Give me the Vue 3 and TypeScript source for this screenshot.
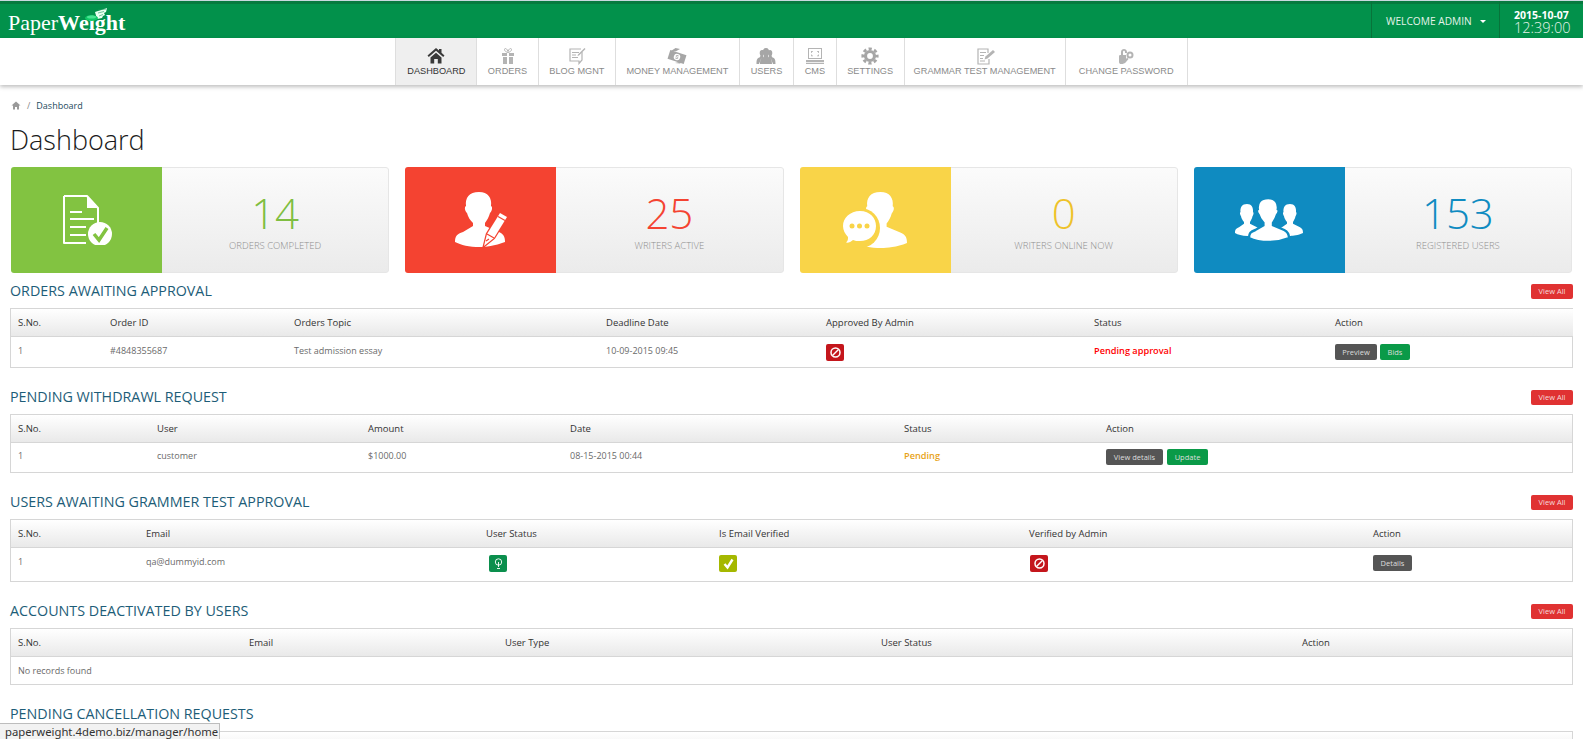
<script setup lang="ts">
type Btn = { label: string; kind: 'dark' | 'green'; w: number }
type Cell =
  | { t: 'text'; v: string }
  | { t: 'status'; v: string; c: string }
  | { t: 'badge'; icon: 'ban' | 'check' | 'bulb' }
  | { t: 'btns'; v: Btn[] }
type Section = {
  title: string
  cols: number[]
  heads: string[]
  rowClass: string
  row: Cell[]
  empty?: string
  noLink?: boolean
}
const txt = (v: string): Cell => ({ t: 'text', v })
const navItems = [
  { label: 'Dashboard', icon: 'home', active: true, w: 82 },
  { label: 'Orders', icon: 'gift', w: 61.3 },
  { label: 'Blog Mgnt', icon: 'blog', w: 77.5 },
  { label: 'Money Management', icon: 'money', w: 123.5 },
  { label: 'Users', icon: 'users', w: 54.6 },
  { label: 'CMS', icon: 'cms', w: 42.4 },
  { label: 'Settings', icon: 'gear', w: 68 },
  { label: 'Grammar Test Management', icon: 'test', w: 161 },
  { label: 'Change Password', icon: 'key', w: 122 },
]
const cards = [
  { n: '14', label: 'Orders Completed', cls: 'c-green', icon: 'doc' },
  { n: '25', label: 'Writers Active', cls: 'c-red', icon: 'pen' },
  { n: '0', label: 'Writers Online Now', cls: 'c-yellow', icon: 'chat' },
  { n: '153', label: 'Registered Users', cls: 'c-blue', icon: 'group' },
]
const sections: Section[] = [
  {
    title: 'Orders Awaiting Approval',
    cols: [92, 184, 312, 220, 268, 241, 245],
    heads: ['S.No.', 'Order ID', 'Orders Topic', 'Deadline Date', 'Approved By Admin', 'Status', 'Action'],
    rowClass: 'r1',
    row: [
      txt('1'), txt('#4848355687'), txt('Test admission essay'), txt('10-09-2015 09:45'),
      { t: 'badge', icon: 'ban' },
      { t: 'status', v: 'Pending approval', c: 'st-red' },
      { t: 'btns', v: [{ label: 'Preview', kind: 'dark', w: 42 }, { label: 'Bids', kind: 'green', w: 30 }] },
    ],
  },
  {
    title: 'Pending Withdrawl Request',
    cols: [139, 211, 202, 334, 202, 473],
    heads: ['S.No.', 'User', 'Amount', 'Date', 'Status', 'Action'],
    rowClass: 'r2',
    row: [
      txt('1'), txt('customer'), txt('$1000.00'), txt('08-15-2015 00:44'),
      { t: 'status', v: 'Pending', c: 'st-amber' },
      { t: 'btns', v: [{ label: 'View details', kind: 'dark', w: 57 }, { label: 'Update', kind: 'green', w: 41 }] },
    ],
  },
  {
    title: 'Users Awaiting Grammer Test Approval',
    cols: [128, 340, 233, 310, 344, 206],
    heads: ['S.No.', 'Email', 'User Status', 'Is Email Verified', 'Verified by Admin', 'Action'],
    rowClass: 'r3',
    row: [
      txt('1'), txt('qa@dummyid.com'),
      { t: 'badge', icon: 'bulb' },
      { t: 'badge', icon: 'check' },
      { t: 'badge', icon: 'ban' },
      { t: 'btns', v: [{ label: 'Details', kind: 'dark', w: 39 }] },
    ],
  },
  {
    title: 'Accounts Deactivated By Users',
    cols: [231, 256, 376, 421, 277],
    heads: ['S.No.', 'Email', 'User Type', 'User Status', 'Action'],
    rowClass: 'r4',
    row: [],
    empty: 'No records found',
  },
  {
    title: 'Pending Cancellation Requests',
    cols: [1561],
    heads: [''],
    rowClass: 'r5',
    row: [],
    noLink: true,
  },
]
const personPath =
  'M24 0C33 0 37 6 36 14C38 15 37 19 35 21C34 25 32 28 30 31L30 34L44 40C48 42 50 44 50 50C40 54 30 55 25 55C14 55 6 53 0 50C0 44 2 42 8 40L18 34L18 31C15 28 13 25 12 21C10 19 9 15 11 14C10 6 14 0 24 0Z'
</script>

<template>
  <div class="page">
    <header class="topbar">
      <div class="logo">
        <span class="logo-a">Paper</span><span class="logo-b">Weight</span>
        <svg class="logo-mark" width="24" height="14" viewBox="0 0 24 14">
          <path d="M10 4L22 0L21 4L19 5L20 7L18 8L17 10L12 11Z" fill="#eafff2" />
          <path d="M13 2L21 1M13 5L19 3.500M14 8L18 6.500" stroke="#1a9a5c" stroke-width=".6" />
          <ellipse cx="6.500" cy="10" rx="6.500" ry="3" fill="#10c866" />
          <ellipse cx="6.500" cy="9" rx="4.500" ry="1.500" fill="#4be394" />
        </svg>
      </div>
      <div class="top-right">
        <div class="welcome">WELCOME ADMIN <span class="caret"></span></div>
        <div class="clock">
          <div class="date">2015-10-07</div>
          <div class="time">12:39:00</div>
        </div>
      </div>
    </header>

    <nav class="nav">
      <a
        v-for="item in navItems"
        :key="item.label"
        class="nav-item"
        :class="[{ active: item.active }, 'i-' + item.icon]"
        :style="{ width: item.w + 'px' }"
      >
        <svg class="nav-ico" width="20" height="18" viewBox="0 0 20 18" fill="currentColor">
          <template v-if="item.icon === 'home'">
            <path d="M10 1L1.500 8.500L2.800 10L10 3.700L17.200 10L18.500 8.500L15.500 5.800V2H13V3.600Z" />
            <path d="M4.500 10.500L10 5.700L15.500 10.500V16.500H11.800V12H8.200V16.500H4.500Z" />
          </template>
          <template v-else-if="item.icon === 'gift'">
            <path d="M4 6H9V9H4ZM11 6H16V9H11ZM5 10H9V17H5ZM11 10H15V17H11Z" />
            <path d="M10 5.500C8 5 6.500 4 6.500 2.500C6.500 1 9 1 10 4.500C11 1 13.500 1 13.500 2.500C13.500 4 12 5 10 5.500Z" fill="none" stroke="currentColor" />
          </template>
          <template v-else-if="item.icon === 'blog'">
            <path d="M15 5V13L12 16.500V14H3V2H14" fill="none" stroke="currentColor" stroke-width="1.200" />
            <path d="M5 5H12V6H5ZM5 7.500H9V8.500H5ZM5 10H11V11H5Z" />
            <path d="M17.500 1L18.500 2L12 8.500L10.500 9L11 7.500Z" />
          </template>
          <template v-else-if="item.icon === 'money'">
            <g transform="rotate(18 10 10)">
              <path d="M1.500 5.500H18.500V14.500H1.500ZM10 6.800A3.200 3.200 0 1 0 10 13.200A3.200 3.200 0 0 0 10 6.800Z" fill-rule="evenodd" />
              <path d="M11.300 8.500H9.500C8.600 8.500 8.600 10 9.700 10H10.300C11.400 10 11.400 11.500 10.500 11.500H8.700" fill="none" stroke="currentColor" stroke-width=".8" />
            </g>
            <path d="M4 4L8.500 1L13 2L9 4.300ZM8 16L13 16.500L17 14L12 15Z" />
          </template>
          <template v-else-if="item.icon === 'users'">
            <path d="M6 3C8 3 8.500 5 8 7L7 9L8 11L5 12L3 17H0.500C0.500 13 1 11 3.500 10.500L4.500 9L3.800 7C3.500 5 4 3 6 3ZM14 3C16 3 16.500 5 16.200 7L15.500 9L16.500 10.500C19 11 19.500 13 19.500 17H17L15 12L12 11L13 9L12 7C11.500 5 12 3 14 3Z" />
            <path d="M10 1C13 1 13.500 4 13 6.500L12 9L12.500 10.500C15 11 16 12.500 16 17H4C4 12.500 5 11 7.500 10.500L8 9L7 6.500C6.500 4 7 1 10 1Z" />
          </template>
          <template v-else-if="item.icon === 'cms'">
            <path d="M3 1H17V12H3ZM4 2V11H16V2Z" fill-rule="evenodd" />
            <path d="M6 4H8V4.800H6.800V6H6ZM12 4H14V6H13.200V4.800H12ZM6 7.500H6.800V8.500H8V9.300H6ZM13.200 7.500H14V9.300H12V8.500H13.200Z" />
            <path d="M1 13H19V15H1ZM1 15.800H19V17H1Z" />
          </template>
          <template v-else-if="item.icon === 'gear'">
            <circle cx="10" cy="9" r="4.500" fill="none" stroke="currentColor" stroke-width="3.200" />
            <circle cx="10" cy="9" r="7.200" fill="none" stroke="currentColor" stroke-width="2.800" stroke-dasharray="3.200 2.450" stroke-dashoffset="1.600" />
          </template>
          <template v-else-if="item.icon === 'test'">
            <path d="M13 6V2H3V17H14V12" fill="none" stroke="currentColor" stroke-width="1.200" />
            <path d="M5 5H11V6H5ZM5 8H9V9H5ZM5 11H8V12H5ZM5 13.500H10V14.500H5Z" />
            <path d="M18 3L20 5L12.500 11.500L9.500 12.500L10.500 9.500Z" />
          </template>
          <template v-else-if="item.icon === 'key'">
            <path d="M5 8V5C5 1 11 1 11 5V6H9V5C9 3.200 7 3.200 7 5V8H10V15C9 16.500 7 17 5 17C4 17 3 16.500 3 15V9C3 8.500 3.500 8 5 8Z" />
            <path d="M14 4.500A3.500 3.500 0 1 0 14 11.500A3.500 3.500 0 0 0 14 4.500ZM14 6.500A1.500 1.500 0 1 1 14 9.500A1.500 1.500 0 0 1 14 6.500Z" fill-rule="evenodd" />
            <path d="M11 10.500L12.500 12L10 15L9 14Z" />
          </template>
        </svg>
        <span class="nav-label">{{ item.label }}</span>
      </a>
    </nav>

    <main class="content">
      <div class="crumbs">
        <svg width="10" height="9" viewBox="0 0 20 18" fill="#9a9a9a">
          <path d="M10 1L1 9H4V17H8V12H12V17H16V9H19Z" />
        </svg>
        <span class="sep">/</span>
        <span class="crumb">Dashboard</span>
      </div>
      <h1 class="title">Dashboard</h1>

      <div class="cards">
        <div v-for="c in cards" :key="c.label" class="card" :class="c.cls">
          <div class="card-ico">
            <svg v-if="c.icon === 'doc'" width="50" height="50" viewBox="0 0 50 50">
              <path d="M2 1H25L36 13V30M24 48H2V1" fill="none" stroke="#fff" stroke-width="2" stroke-linejoin="round" />
              <path d="M25 1V13H36Z" fill="#fff" />
              <path d="M8 17H20M8 24H32M8 32H24M8 40H24" stroke="#fff" stroke-width="2" />
              <circle cx="38" cy="39" r="12" fill="#fff" />
              <path d="M32 39L37 45L45 33" fill="none" stroke="#82c341" stroke-width="3.500" />
            </svg>
            <svg v-else-if="c.icon === 'pen'" width="52" height="56" viewBox="0 0 52 56">
              <path :d="personPath" fill="#fff" />
              <path d="M29 54L32 42L45 21L52 25L39 46Z" fill="#fff" stroke="#f44331" stroke-width="2.500" paint-order="stroke" />
              <path d="M43 24.500L50 28.500" stroke="#f44331" stroke-width="1.200" />
              <path d="M32 42L39 46M31 49L34 47" stroke="#f44331" stroke-width="1.200" />
            </svg>
            <svg v-else-if="c.icon === 'chat'" width="64" height="57" viewBox="0 0 64 57">
              <g transform="translate(13 0) scale(1.020)">
                <path :d="personPath" fill="#fff" />
              </g>
              <circle cx="17" cy="36" r="20" fill="#f9d448" />
              <path d="M17 19C27 19 33 26 33 34C33 43 26 49 17 49C14 49 12 49 10 48C8 50 5 51 3 50.500C5 49 5 47 5 45C2 42 0 38 0 34C0 26 7 19 17 19Z" fill="#fff" />
              <circle cx="9" cy="34" r="2.500" fill="#f9d448" />
              <circle cx="16.500" cy="34" r="2.500" fill="#f9d448" />
              <circle cx="24" cy="34" r="2.500" fill="#f9d448" />
            </svg>
            <svg v-else width="68" height="44" viewBox="0 0 68 44">
              <g transform="translate(0 6) scale(.5 .58)"><path :d="personPath" fill="#fff" /></g>
              <g transform="translate(43 6) scale(.5 .58)"><path :d="personPath" fill="#fff" /></g>
              <g transform="translate(14 0) scale(.8)"><path :d="personPath" fill="#fff" stroke="#0f8bc1" stroke-width="3" /></g>
            </svg>
          </div>
          <div class="card-body">
            <div class="num">{{ c.n }}</div>
            <div class="lbl">{{ c.label }}</div>
          </div>
        </div>
      </div>

      <section v-for="s in sections" :key="s.title" class="section">
        <div class="sec-head">
          <h2 class="sec-title">{{ s.title }}</h2>
          <a v-if="!s.noLink" class="view-all">View All</a>
        </div>
        <div class="tbl-wrap">
          <table class="tbl" :class="s.rowClass">
            <colgroup>
              <col v-for="(w, i) in s.cols" :key="i" :style="{ width: w + 'px' }" />
            </colgroup>
            <thead>
              <tr><th v-for="h in s.heads" :key="h">{{ h }}</th></tr>
            </thead>
            <tbody>
              <tr v-if="s.empty"><td :colspan="s.cols.length">{{ s.empty }}</td></tr>
              <tr v-else-if="s.row.length">
                <td v-for="(cell, i) in s.row" :key="i">
                  <template v-if="cell.t === 'text'">{{ cell.v }}</template>
                  <span v-else-if="cell.t === 'status'" class="status" :class="cell.c">{{ cell.v }}</span>
                  <span v-else-if="cell.t === 'badge'" class="badge" :class="'b-' + cell.icon">
                    <svg width="13" height="13" viewBox="0 0 13 13" fill="none" stroke="#fff">
                      <template v-if="cell.icon === 'ban'">
                        <circle cx="6.500" cy="6.500" r="4.500" stroke-width="1.500" />
                        <path d="M3.500 9.500L9.500 3.500" stroke-width="1.500" />
                      </template>
                      <path v-else-if="cell.icon === 'check'" d="M2.500 7L5.500 10.500L10.500 2.500" stroke-width="2.400" />
                      <template v-else>
                        <circle cx="6.500" cy="5" r="3.200" stroke-width=".9" />
                        <path d="M6.500 5V10M5 11.500H8" stroke-width=".9" />
                      </template>
                    </svg>
                  </span>
                  <div v-else class="btns">
                    <a v-for="b in cell.v" :key="b.label" class="btn" :class="b.kind" :style="{ width: b.w + 'px' }">{{ b.label }}</a>
                  </div>
                </td>
              </tr>
            </tbody>
          </table>
        </div>
      </section>
    </main>

    <div class="tooltip">paperweight.4demo.biz/manager/home</div>
  </div>
</template>

<style>
html, body { margin: 0; height: 100%; overflow: hidden; background: #fff; }
</style>

<style scoped>
.page {
  font-family: "Open Sans", "Noto Sans", sans-serif;
  height: 739px;
  overflow: hidden;
  position: relative;
  color: #555;
}
.topbar {
  height: 38px;
  box-sizing: border-box;
  background: #02914b;
  border-top: 1px solid #c9d9df;
  box-shadow: inset 0 3px 0 #067a3f;
  display: flex;
  justify-content: space-between;
  color: #fff;
}
.logo {
  position: relative;
  padding: 10px 0 0 8px;
  line-height: 24px;
  font-family: "Liberation Serif", serif;
  font-size: 22px;
}
.logo-a { font-weight: 400; }
.logo-b { font-weight: 700; }
.logo-mark { position: absolute; left: 85px; top: 7px; }
.top-right { display: flex; }
.welcome {
  width: 128px;
  box-sizing: border-box;
  padding: 13px 0 0 14px;
  border-left: 1px solid #07733a;
  font-size: 10.200px;
  line-height: 14px;
  color: #e4f3ea;
  white-space: nowrap;
}
.caret {
  display: inline-block;
  margin: 0 0 2px 6px;
  border-left: 3px solid transparent;
  border-right: 3px solid transparent;
  border-top: 3px solid #fff;
}
.clock {
  width: 84px;
  box-sizing: border-box;
  padding: 8px 0 0 14px;
  border-left: 1px solid #07733a;
  white-space: nowrap;
}
.date { font-size: 10.500px; font-weight: 700; line-height: 12px; }
.time { font-size: 14.500px; font-weight: 300; line-height: 13px; color: #e4f3ea; }

.nav {
  height: 47px;
  display: flex;
  justify-content: center;
  background: #fff;
  box-shadow: 0 2px 4px rgba(0, 0, 0, 0.25);
  position: relative;
}
.nav-item {
  flex: none;
  display: flex;
  flex-direction: column;
  align-items: center;
  box-sizing: border-box;
  padding-top: 9px;
  border-right: 1px solid #dedede;
  color: #b4b4b4;
}
.nav-item:first-child { border-left: 1px solid #dedede; }
.nav-item.active { background: #efefef; color: #3a3a3a; }
.nav-item.i-money, .nav-item.i-users, .nav-item.i-gear { color: #a6a6a6; }
.nav-ico { display: block; }
.nav-label {
  font-family: "Liberation Sans", Arial, sans-serif;
  font-size: 9.200px;
  line-height: 13px;
  text-transform: uppercase;
  white-space: nowrap;
  color: #8a8a8a;
}
.nav-item.active .nav-label { color: #333; }

.content { padding: 0 10px; }
.crumbs {
  display: flex;
  align-items: center;
  height: 14px;
  margin: 13px 0 0 1px;
  font-size: 9px;
}
.sep { margin: 0 6px; color: #888; }
.crumb { color: #1d4a5c; }
.title {
  margin: 8px 0 0;
  font-size: 27px;
  line-height: 40px;
  font-weight: 300;
  color: #1a1a1a;
}
.cards {
  display: grid;
  grid-template-columns: repeat(4, 378.250px);
  gap: 16px;
  margin: 7px 0 0 1px;
}
.card {
  height: 106px;
  display: flex;
  border-radius: 3px;
  overflow: hidden;
}
.card-ico {
  width: 151px;
  flex: none;
  display: flex;
  align-items: center;
  justify-content: center;
}
.card-body {
  flex: 1;
  box-sizing: border-box;
  text-align: center;
  border: 1px solid #e6e6e6;
  border-left: 0;
  border-radius: 0 3px 3px 0;
  background: linear-gradient(#fbfbfb, #ebebeb);
  padding-top: 19px;
}
.num { font-size: 42px; font-weight: 300; line-height: 52px; }
.lbl {
  font-size: 9.500px;
  line-height: 14px;
  font-weight: 300;
  color: #8e8e8e;
  text-transform: uppercase;
}
.c-green .card-ico { background: #82c341; }
.c-green .num { color: #7fbe41; }
.c-red .card-ico { background: #f44331; }
.c-red .num { color: #f44331; }
.c-yellow .card-ico { background: #f9d448; }
.c-yellow .num { color: #eec22a; }
.c-blue .card-ico { background: #0f8bc1; }
.c-blue .num { color: #0f8bc1; }

.section { margin-top: 22px; }
.cards + .section { margin-top: 11px; }
.sec-head {
  display: flex;
  align-items: center;
  justify-content: space-between;
  height: 15px;
  margin-bottom: 9px;
}
.sec-title {
  margin: -2px 0 0;
  font-size: 14.300px;
  font-weight: 400;
  line-height: 15px;
  text-transform: uppercase;
  color: #1d5d78;
}
.view-all {
  width: 42px;
  height: 15px;
  line-height: 15px;
  text-align: center;
  font-size: 7.500px;
  color: #f4dcdc;
  background: #e03232;
  border-radius: 2px;
}
.tbl-wrap { border: 1px solid #d6d6d6; }
.tbl {
  width: 100%;
  border-collapse: separate;
  border-spacing: 0;
  table-layout: fixed;
  font-size: 9px;
}
.tbl th {
  height: 28px;
  box-sizing: border-box;
  padding: 0 7px;
  text-align: left;
  font-size: 9.500px;
  font-weight: 400;
  color: #333;
  background: linear-gradient(#fff, #e9e9e9);
  border-bottom: 1px solid #d6d6d6;
}
.tbl td {
  padding: 6px 7px;
  vertical-align: top;
  color: #6a6a6a;
  line-height: 13px;
  box-sizing: border-box;
}
.r1 td { height: 30px; padding-top: 7px; padding-bottom: 5px; }
.r2 td { height: 29px; }
.r3 td { height: 33px; padding-top: 7px; padding-bottom: 8px; }
.r4 td { height: 27px; padding-top: 7px; }
.status { font-size: 9.200px; font-weight: 600; }
.st-red { color: #f00; }
.st-amber { color: #e8a317; }
.badge {
  width: 18px;
  height: 17px;
  border-radius: 2px;
  display: flex;
  align-items: center;
  justify-content: center;
}
.b-ban { background: #c4161c; }
.b-check { background: #a5b800; }
.b-bulb { background: #0b8f4d; }
.r3 .b-bulb { margin-left: 3px; }
.r3 .b-ban { margin-left: 1px; }
.btns { display: flex; gap: 3px; }
.r2 .btns { gap: 4px; }
.btn {
  height: 16px;
  line-height: 16px;
  text-align: center;
  font-size: 7.500px;
  color: #ddd;
  border-radius: 2px;
}
.btn.dark { background: #555; }
.btn.green { background: #0a9a48; }

.tooltip {
  position: absolute;
  left: 0;
  bottom: 0;
  width: 220px;
  box-sizing: border-box;
  height: 16px;
  padding-left: 5px;
  background: #f2f2f2;
  border: 1px solid #bdbdbd;
  border-width: 1px 1px 0 0;
  font-family: "Noto Sans", sans-serif;
  font-size: 11.300px;
  line-height: 16px;
  color: #333;
  white-space: nowrap;
}
</style>
